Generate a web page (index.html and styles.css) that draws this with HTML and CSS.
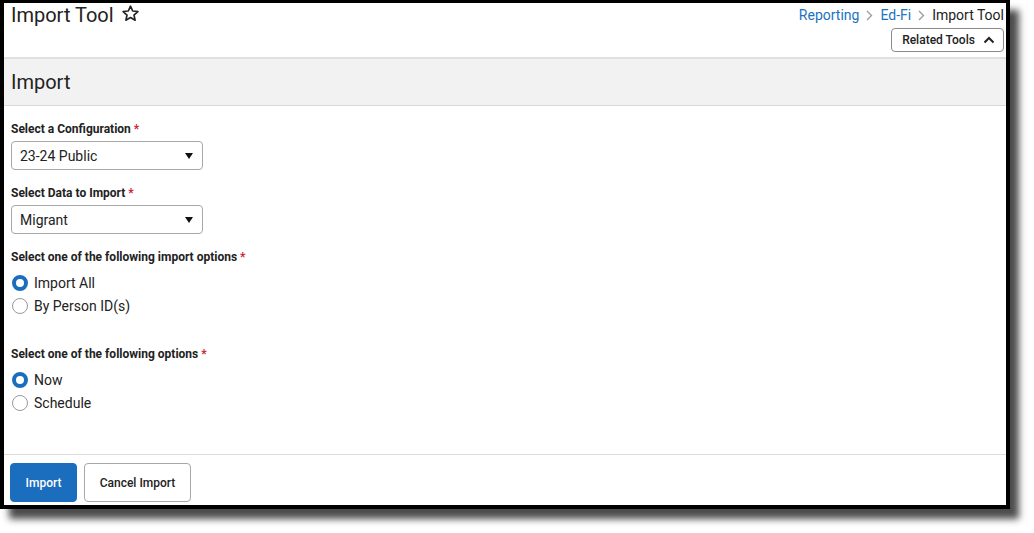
FILE: index.html
```html
<!DOCTYPE html>
<html lang="en">
<head>
    <meta charset="UTF-8">
    <title>Import Tool</title>
    <link rel="stylesheet" href="styles.css">
</head>
<body>
    <div class="frame">
        <div class="page-header">
            <h1 class="page-title">Import Tool
                <svg class="star" width="19" height="19" viewBox="0 0 24 24"><path d="M12 2.8l2.75 6.05 6.6.65-4.95 4.45 1.42 6.5L12 17.15l-5.82 3.3 1.42-6.5-4.95-4.45 6.6-.65z" fill="none" stroke="#222" stroke-width="2.1" stroke-linejoin="round"/></svg>
            </h1>
            <div class="header-right">
                <div class="breadcrumb">
                    <a href="#">Reporting</a>
                    <svg class="sep" width="7" height="11" viewBox="0 0 7 11"><path d="M1 1l4.5 4.5L1 10" fill="none" stroke="#9a9a9a" stroke-width="1.3"/></svg>
                    <a href="#">Ed-Fi</a>
                    <svg class="sep" width="7" height="11" viewBox="0 0 7 11"><path d="M1 1l4.5 4.5L1 10" fill="none" stroke="#9a9a9a" stroke-width="1.3"/></svg>
                    <span>Import Tool</span>
                </div>
                <button class="related-btn">Related Tools
                    <svg width="12" height="8" viewBox="0 0 12 8"><path d="M1.5 6.5L6 2l4.5 4.5" fill="none" stroke="#222" stroke-width="2"/></svg>
                </button>
            </div>
        </div>

        <div class="section-bar">
            <h2>Import</h2>
        </div>

        <form class="import-form">
            <div class="field">
                <label class="form-label">Select a Configuration <span class="req">*</span></label>
                <div class="select-box">
                    <span>23-24 Public</span>
                    <span class="caret"></span>
                </div>
            </div>
            <div class="field">
                <label class="form-label">Select Data to Import <span class="req">*</span></label>
                <div class="select-box">
                    <span>Migrant</span>
                    <span class="caret"></span>
                </div>
            </div>
            <div class="field field-options">
                <label class="form-label">Select one of the following import options <span class="req">*</span></label>
                <div class="radio-list">
                    <div class="radio-row"><span class="radio checked"></span>Import All</div>
                    <div class="radio-row"><span class="radio"></span>By Person ID(s)</div>
                </div>
            </div>
            <div class="field field-spaced">
                <label class="form-label">Select one of the following options <span class="req">*</span></label>
                <div class="radio-list">
                    <div class="radio-row"><span class="radio checked"></span>Now</div>
                    <div class="radio-row"><span class="radio"></span>Schedule</div>
                </div>
            </div>
        </form>

        <div class="footer">
            <button class="btn btn-primary">Import</button>
            <button class="btn btn-default">Cancel Import</button>
        </div>
    </div>
</body>
</html>
```

FILE: styles.css
```css
html, body {
    margin: 0;
    background: #fff;
    font-family: Roboto, "Liberation Sans", sans-serif;
    color: #222;
}

body {
    min-height: 533px;
}

.frame {
    width: 1010px;
    height: 509px;
    box-sizing: border-box;
    border: solid #000;
    border-width: 3px 4px 4px 4px;
    background: #fff;
    box-shadow: 9px 10px 7px rgba(0, 0, 0, 0.7);
    display: flex;
    flex-direction: column;
}

.page-header {
    height: 54px;
    display: flex;
    justify-content: space-between;
    padding: 0 2px 0 7px;
}

.page-title {
    margin: 0;
    font-size: 20px;
    font-weight: 400;
    line-height: 24px;
    display: flex;
    align-items: center;
    gap: 7px;
    align-self: flex-start;
}

.star {
    margin-top: -3px;
}

.header-right {
    display: flex;
    flex-direction: column;
    align-items: flex-end;
}

.breadcrumb {
    margin-top: 2px;
    height: 20px;
    font-size: 14px;
    display: flex;
    align-items: center;
    gap: 7px;
}

.breadcrumb a {
    color: #1b72c4;
    text-decoration: none;
}

.related-btn {
    margin-top: 3px;
    width: 113px;
    height: 24px;
    box-sizing: border-box;
    border: 1px solid #8a8a8a;
    border-radius: 4px;
    background: #fff;
    font-family: Roboto, "Liberation Sans", sans-serif;
    font-size: 12px;
    font-weight: 500;
    color: #222;
    display: flex;
    align-items: center;
    justify-content: center;
    gap: 8px;
    padding: 0 0 0 2px;
}

.section-bar {
    background: #f2f2f2;
    border-top: 2px solid #e0e0e0;
    border-bottom: 1px solid #d8d8d8;
    height: 46px;
    padding-left: 7px;
    display: flex;
    align-items: center;
}

.section-bar h2 {
    margin: 0;
    font-size: 20px;
    font-weight: 400;
    margin-top: -1px;
}

.import-form {
    flex: 1;
    padding: 15px 7px 0;
}

.field {
    margin-bottom: 15px;
}

.field-options {
    margin-top: 1px;
}

.field-spaced {
    margin-top: 29px;
}

.form-label {
    display: block;
    font-size: 12px;
    font-weight: 700;
    line-height: 16px;
    color: #222;
    margin-bottom: 4px;
}

.req {
    color: #d0212f;
}

.select-box {
    width: 192px;
    height: 29px;
    box-sizing: border-box;
    border: 1px solid #a8a8a8;
    border-radius: 4px;
    padding: 0 9px 0 8px;
    font-size: 14px;
    display: flex;
    align-items: center;
    justify-content: space-between;
}

.caret {
    width: 0;
    height: 0;
    border-left: 4px solid transparent;
    border-right: 4px solid transparent;
    border-top: 6px solid #111;
}

.radio-list {
    padding-top: 2px;
}

.radio-row {
    height: 23px;
    display: flex;
    align-items: center;
    gap: 6px;
    font-size: 14px;
    margin-left: 1px;
}

.radio {
    width: 16px;
    height: 16px;
    box-sizing: border-box;
    border-radius: 50%;
    border: 1px solid #9a9a9a;
    background: #fff;
}

.radio.checked {
    border: 4.5px solid #1b6dbd;
}

.footer {
    border-top: 1px solid #dcdcdc;
    padding: 8px 6px 3px;
    display: flex;
    gap: 7px;
}

.btn {
    height: 39px;
    box-sizing: border-box;
    border-radius: 4px;
    font-family: Roboto, "Liberation Sans", sans-serif;
    font-size: 12px;
    font-weight: 500;
    padding: 0;
    white-space: nowrap;
}

.btn-primary {
    width: 67px;
    background: #1b6dbd;
    border: 1px solid #1b6dbd;
    color: #fff;
}

.btn-default {
    width: 107px;
    background: #fff;
    border: 1px solid #a8a8a8;
    color: #222;
}
```
